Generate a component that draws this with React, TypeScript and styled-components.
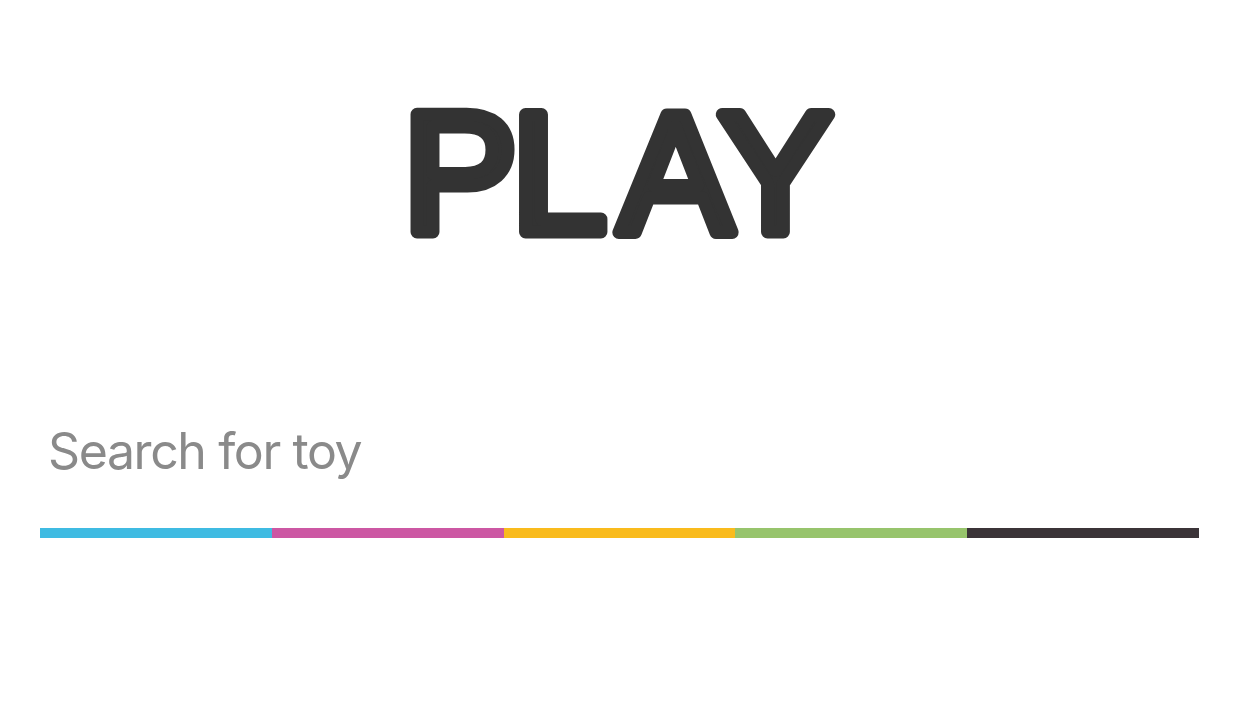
import React from 'react';
import styled, { createGlobalStyle } from 'styled-components';

const GlobalStyle = createGlobalStyle`
  html, body {
    margin: 0;
    padding: 0;
    background: #ffffff;
  }
  body {
    font-family: Inter, "Liberation Sans", sans-serif;
  }
`;

const Page = styled.div`
  display: flex;
  flex-direction: column;
  width: 100%;
  min-height: 709px;
`;

const Header = styled.header`
  display: flex;
  justify-content: center;
  height: 300px;
`;

const Logo = styled.svg`
  display: block;
  width: 1241px;
  height: 300px;
`;

const SearchArea = styled.div`
  display: flex;
  flex-direction: column;
  padding: 0 42px 0 40px;
`;

const SearchInput = styled.input`
  display: block;
  box-sizing: border-box;
  width: 100%;
  height: 117px;
  margin-top: 111px;
  padding: 0 0 37px 8px;
  border: none;
  outline: none;
  background: transparent;
  font-family: Inter, "Liberation Sans", sans-serif;
  font-size: 50px;
  letter-spacing: -1.4px;
  color: #333;

  &::placeholder {
    color: #8a8a8a;
  }
`;

const Stripe = styled.div`
  display: grid;
  grid-template-columns: repeat(5, 1fr);
  height: 10px;
`;

const Segment = styled.span<{ $color: string }>`
  display: block;
  background: ${({ $color }) => $color};
`;

const colors = ['#3fbbe2', '#cc57a3', '#f9bb1d', '#97c46c', '#3b3438'];

const App: React.FC = () => {
  return (
    <>
      <GlobalStyle />
      <Page>
        <Header>
          <Logo viewBox="0 0 1241 300">
            {/* one x per letter so the spacing follows the logo */}
            <text
              x="403 511.4 618.4 718.5"
              y="232"
              fontFamily='"Liberation Sans", Arial, sans-serif'
              fontSize="171"
              fill="#333333"
              stroke="#333333"
              strokeWidth="13"
              strokeLinejoin="round"
            >
              PLAY
            </text>
          </Logo>
        </Header>
        <SearchArea>
          <SearchInput type="text" placeholder="Search for toy" />
          <Stripe>
            {colors.map((c) => (
              <Segment key={c} $color={c} />
            ))}
          </Stripe>
        </SearchArea>
      </Page>
    </>
  );
};

export default App;
